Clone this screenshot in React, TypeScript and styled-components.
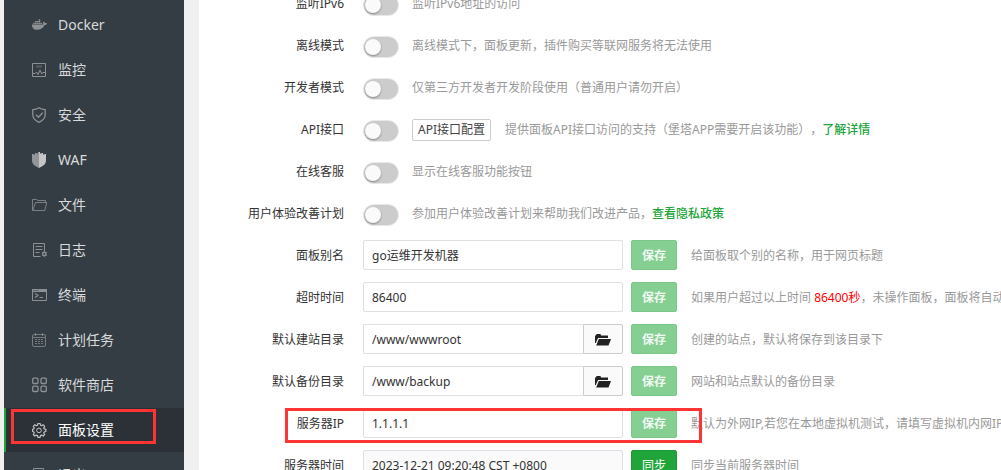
import React from "react";
import styled, { createGlobalStyle, css } from "styled-components";
import { FaDocker } from "react-icons/fa";

const GlobalStyle = createGlobalStyle`
  *, *::before, *::after { box-sizing: border-box; }
  html, body { margin: 0; padding: 0; background: #f0f0f0; }
  body, button, input {
    font-family: "Noto Sans", "Noto Sans CJK SC", sans-serif;
    font-size: 12px;
  }
  body {
    color: #333;
    line-height: 20px;
    overflow: hidden;
    text-spacing-trim: space-all;
  }
`;

const Page = styled.div`
  display: flex;
  gap: 15px;
  height: 100vh;
  padding-left: 4px;
  overflow: hidden;
`;

const Sidebar = styled.nav`
  flex: 0 0 180px;
  padding-top: 3px;
  background: #353d44;
  overflow: hidden;
`;

const NavList = styled.ul`
  display: flex;
  flex-direction: column;
  gap: 1px;
  margin: 0;
  padding: 0;
  list-style: none;
`;

const NavItem = styled.li`
  position: relative;
`;

const NavLink = styled.a<{ $active?: boolean }>`
  display: flex;
  align-items: center;
  gap: 10px;
  height: 44px;
  padding-left: 26px;
  border-left: 2px solid ${(p) => (p.$active ? "#20a53a" : "#3a3d40")};
  background: ${(p) => (p.$active ? "#2c3138" : "transparent")};
  color: ${(p) => (p.$active ? "#fff" : "#d8dadb")};
  font-size: 14px;
  text-decoration: none;
  white-space: nowrap;

  svg {
    flex: none;
    color: ${(p) => (p.$active ? "#c0c2c4" : "#8e9193")};
  }
`;

const Content = styled.main`
  flex: 1;
  min-width: 0;
  background: #fff;
  overflow: hidden;
`;

const Form = styled.form`
  display: flex;
  flex-direction: column;
  gap: 12px;
  margin-top: -12px;
`;

const Row = styled.div`
  position: relative;
  display: flex;
  align-items: center;
  height: 30px;
  white-space: nowrap;
`;

const RowLabel = styled.label`
  flex: 0 0 145px;
  margin-right: 19px;
  padding-top: 2px;
  text-align: right;
`;

const Switch = styled.input`
  appearance: none;
  flex: none;
  width: 36px;
  height: 22px;
  margin: 4px 13px 0 0;
  padding: 2px 1px;
  border: 1px solid #e8e8e8;
  border-radius: 11px;
  background: #ccc;

  &::before {
    content: "";
    display: block;
    width: 16px;
    height: 16px;
    border-radius: 50%;
    background: #fafafa;
    box-shadow: 0 1px 2px rgba(0, 0, 0, 0.35);
  }

  &:checked {
    background: #20a53a;
  }

  &:checked::before {
    margin-left: 16px;
  }
`;

const SmallButton = styled.button`
  height: 22px;
  margin: 2px 14px 0 0;
  padding: 0 5px;
  border: 1px solid #ccc;
  border-radius: 2px;
  background: #fff;
  color: #444;
  line-height: 20px;
`;

const Field = styled.div`
  display: flex;
  flex: 0 0 260px;
  height: 30px;
  margin-right: 8px;
`;

const TextInput = styled.input<{ $joined?: boolean }>`
  flex: 1;
  min-width: 0;
  height: 30px;
  padding: 0 8px;
  border: 1px solid #dcdfe6;
  border-radius: 2px;
  background: #fff;
  color: #333;
  outline: none;

  ${(p) =>
    p.$joined &&
    css`
      border-right: 0;
      border-radius: 2px 0 0 2px;
    `}

  &:disabled {
    background: #fafafa;
  }
`;

const FolderButton = styled.button`
  display: flex;
  flex: 0 0 40px;
  align-items: center;
  justify-content: center;
  padding: 2px 0 0;
  border: 1px solid #ccc;
  border-radius: 0 2px 2px 0;
  background: #fafafa;
  color: #222;
`;

const SaveButton = styled.button<{ $ready?: boolean }>`
  flex: 0 0 46px;
  height: 30px;
  margin-right: 14px;
  padding: 0;
  border: 1px solid ${(p) => (p.$ready ? "#1c9a35" : "#79c889")};
  border-radius: 2px;
  background: ${(p) => (p.$ready ? "#20a53a" : "#86cf93")};
  color: ${(p) => (p.$ready ? "#fff" : "#f0faf2")};
  font-weight: ${(p) => (p.$ready ? 400 : 600)};
`;

const Hint = styled.span`
  padding-top: 2px;
  color: #999;
`;

const HintLink = styled.a`
  color: #20a53a;
  font-weight: 500;
  text-decoration: none;
`;

const Warning = styled.span`
  color: #f00;
`;

const NavMark = styled.span`
  position: absolute;
  inset: 1px 28px 8px 7px;
  border: 3px solid #ff3535;
  pointer-events: none;
`;

const RowMark = styled.span`
  position: absolute;
  top: 0;
  left: 86px;
  width: 417px;
  height: 35px;
  border: 3px solid #ff3535;
  pointer-events: none;
`;

const Icon = ({ children }: { children: React.ReactNode }) => (
  <svg
    width="16"
    height="16"
    viewBox="0 0 16 16"
    fill="none"
    stroke="currentColor"
    strokeWidth="1"
    aria-hidden="true"
  >
    {children}
  </svg>
);

const MonitorIcon = () => (
  <Icon>
    <path d="M.5 1.500h13v13H.5z" />
    <path d="M4 4.500h6" strokeWidth="2" opacity=".4" />
    <path d="M1 11.500h2.200l1.300-1.500 1.500 2.500 2-4.500 1.700 4 1-1.500H13" />
  </Icon>
);

const ShieldCheckIcon = () => (
  <Icon>
    <path
      strokeWidth="1.300"
      d="M7 .8C5.200 2 3 2.600.8 2.700v5.100c0 3.500 2.600 6 6.200 7.500 3.600-1.500 6.200-4 6.200-7.500V2.700C11 2.600 8.800 2 7 .8z"
    />
    <path strokeWidth="1.300" d="M3.800 7.600l2.600 2.600 4.300-4.500" />
  </Icon>
);

const WafIcon = () => (
  <Icon>
    <path
      fill="#939698"
      stroke="none"
      d="M7 0v16C3 14.300 0 12 0 8.500V2h1.500v.5H3V1h1.500v.5H6V0z"
    />
    <path
      fill="#c3c5c6"
      stroke="none"
      d="M7 0v16c4-1.700 7-4 7-7.500V2h-1.500v.5H11V1H9.500v.5H8V0z"
    />
  </Icon>
);

const FolderIcon = () => (
  <Icon>
    <path d="M.5 13.500v-11h4l1.500 1h7.500v2" opacity=".8" />
    <path d="M.8 13.500L3.500 5.500h11.300l-2 8z" opacity=".8" />
  </Icon>
);

const LogIcon = () => (
  <Icon>
    <path d="M8.500 14.500h-7v-13h11v7.500" />
    <path d="M3.500 4.500h7M3.500 7.500h7M3.500 10.500h4" />
    <circle cx="12.300" cy="12" r="1.700" strokeWidth="1.400" />
    <path d="M12.300 9.200v1M12.300 13.800v1M9.900 10.600l.8.500M13.900 12.900l.8.500M9.900 13.400l.8-.5M13.900 11.100l.8-.5" />
  </Icon>
);

const TerminalIcon = () => (
  <Icon>
    <path d="M.5 2.500h14v11H.5z" />
    <path fill="currentColor" stroke="none" d="M0 2h15v3H0z" />
    <path stroke="#353d44" d="M1.500 3.500h1M3.500 3.500h1M5.500 3.500h1" />
    <path d="M3 6.500l3 2-3 2M7.500 10.500h3.500" strokeWidth="1.200" />
  </Icon>
);

const CalendarIcon = () => (
  <Icon>
    <rect x=".5" y="2.500" width="13" height="12" rx="1.500" opacity=".75" />
    <path d="M1 5.500h12M3.500 1v3M10.500 1v3" opacity=".75" />
    <path
      opacity=".7"
      strokeDasharray="2 1"
      d="M3 7.500h8M3 9.500h8M3 11.500h8"
    />
  </Icon>
);

const AppsIcon = () => (
  <Icon>
    <g strokeWidth="1.300">
      <rect x=".7" y="1.200" width="5.300" height="5.300" rx="1" />
      <rect x="9" y="1.200" width="5.300" height="5.300" rx="1" />
      <rect x=".7" y="9.200" width="5.300" height="5.300" rx="1" />
      <rect x="9" y="9.200" width="5.300" height="5.300" rx="1" />
    </g>
  </Icon>
);

const GearIcon = () => (
  <Icon>
    <path
      strokeWidth="1.200"
      strokeLinejoin="round"
      d="M5.900 1.500h2.200l.4 1.700 1.100.5 1.500-1 1.600 1.600-1 1.500.5 1.100 1.700.4v2.200l-1.700.4-.5 1.100 1 1.500-1.600 1.600-1.500-1-1.100.5-.4 1.700H5.900l-.4-1.700-1.100-.5-1.500 1-1.600-1.600 1-1.500-.5-1.100L.6 9.500V7.300l1.200-.4.500-1.100-1-1.500 1.600-1.600 1.500 1 1.100-.5z"
    />
    <circle cx="7" cy="8.400" r="2.300" />
  </Icon>
);

const ExitIcon = () => (
  <Icon>
    <path d="M1.500 1.500h10v13h-10z" />
    <path d="M6 8h9M12 5l3 3-3 3" />
  </Icon>
);

const DockerIcon = () => (
  <svg width="16" height="16" viewBox="0 0 16 16" aria-hidden="true">
    <FaDocker size={15} />
  </svg>
);

const OpenFolderGlyph = () => (
  <svg width="16" height="12" viewBox="0 0 16 12" fill="currentColor" aria-hidden="true">
    <path d="M0 9V1.500h1L1.500 0h4L6 1.500h7V4H3L.8 9z" />
    <path d="M3.800 5H16l-2.500 6.500H1.200z" />
  </svg>
);

const navItems = [
  { text: "Docker", icon: <DockerIcon /> },
  { text: "监控", icon: <MonitorIcon /> },
  { text: "安全", icon: <ShieldCheckIcon /> },
  { text: "WAF", icon: <WafIcon /> },
  { text: "文件", icon: <FolderIcon /> },
  { text: "日志", icon: <LogIcon /> },
  { text: "终端", icon: <TerminalIcon /> },
  { text: "计划任务", icon: <CalendarIcon /> },
  { text: "软件商店", icon: <AppsIcon /> },
  { text: "面板设置", icon: <GearIcon />, active: true },
  { text: "退出", icon: <ExitIcon /> },
];

type SwitchRow = {
  id: string;
  label: string;
  hint: string;
  action?: string;
  link?: string;
};

const switchRows: SwitchRow[] = [
  { id: "ipv6", label: "监听IPv6", hint: "监听IPv6地址的访问" },
  {
    id: "offline",
    label: "离线模式",
    hint: "离线模式下，面板更新，插件购买等联网服务将无法使用",
  },
  {
    id: "developer",
    label: "开发者模式",
    hint: "仅第三方开发者开发阶段使用（普通用户请勿开启）",
  },
  {
    id: "api",
    label: "API接口",
    action: "API接口配置",
    hint: "提供面板API接口访问的支持（堡塔APP需要开启该功能），",
    link: "了解详情",
  },
  { id: "service", label: "在线客服", hint: "显示在线客服功能按钮" },
  {
    id: "improve",
    label: "用户体验改善计划",
    hint: "参加用户体验改善计划来帮助我们改进产品，",
    link: "查看隐私政策",
  },
];

type FieldRow = {
  id: string;
  label: string;
  value: string;
  hint: React.ReactNode;
  folder?: boolean;
  marked?: boolean;
  sync?: boolean;
};

const fieldRows: FieldRow[] = [
  {
    id: "alias",
    label: "面板别名",
    value: "go运维开发机器",
    hint: "给面板取个别的名称，用于网页标题",
  },
  {
    id: "timeout",
    label: "超时时间",
    value: "86400",
    hint: (
      <>
        如果用户超过以上时间 <Warning>86400秒</Warning>，未操作面板，面板将自动退出登录
      </>
    ),
  },
  {
    id: "site-dir",
    label: "默认建站目录",
    value: "/www/wwwroot",
    folder: true,
    hint: "创建的站点，默认将保存到该目录下",
  },
  {
    id: "backup-dir",
    label: "默认备份目录",
    value: "/www/backup",
    folder: true,
    hint: "网站和站点默认的备份目录",
  },
  {
    id: "server-ip",
    label: "服务器IP",
    value: "1.1.1.1",
    marked: true,
    hint: "默认为外网IP,若您在本地虚拟机测试，请填写虚拟机内网IP",
  },
  {
    id: "server-time",
    label: "服务器时间",
    value: "2023-12-21 09:20:48 CST +0800",
    sync: true,
    hint: "同步当前服务器时间",
  },
];

export default function App() {
  return (
    <>
      <GlobalStyle />
      <Page>
        <Sidebar>
          <NavList>
            {navItems.map((item) => (
              <NavItem key={item.text}>
                <NavLink href="#" $active={item.active}>
                  {item.icon}
                  {item.text}
                </NavLink>
                {item.active && <NavMark />}
              </NavItem>
            ))}
          </NavList>
        </Sidebar>
        <Content>
          <Form>
            {switchRows.map((row) => (
              <Row key={row.id}>
                <RowLabel htmlFor={row.id}>{row.label}</RowLabel>
                <Switch type="checkbox" id={row.id} />
                {row.action && <SmallButton type="button">{row.action}</SmallButton>}
                <Hint>
                  {row.hint}
                  {row.link && <HintLink href="#">{row.link}</HintLink>}
                </Hint>
              </Row>
            ))}
            {fieldRows.map((row) => (
              <Row key={row.id}>
                <RowLabel htmlFor={row.id}>{row.label}</RowLabel>
                <Field>
                  <TextInput
                    id={row.id}
                    defaultValue={row.value}
                    disabled={row.sync}
                    $joined={row.folder}
                  />
                  {row.folder && (
                    <FolderButton type="button" aria-label="选择目录">
                      <OpenFolderGlyph />
                    </FolderButton>
                  )}
                </Field>
                <SaveButton type="button" $ready={row.sync}>
                  {row.sync ? "同步" : "保存"}
                </SaveButton>
                <Hint>{row.hint}</Hint>
                {row.marked && <RowMark />}
              </Row>
            ))}
          </Form>
        </Content>
      </Page>
    </>
  );
}
